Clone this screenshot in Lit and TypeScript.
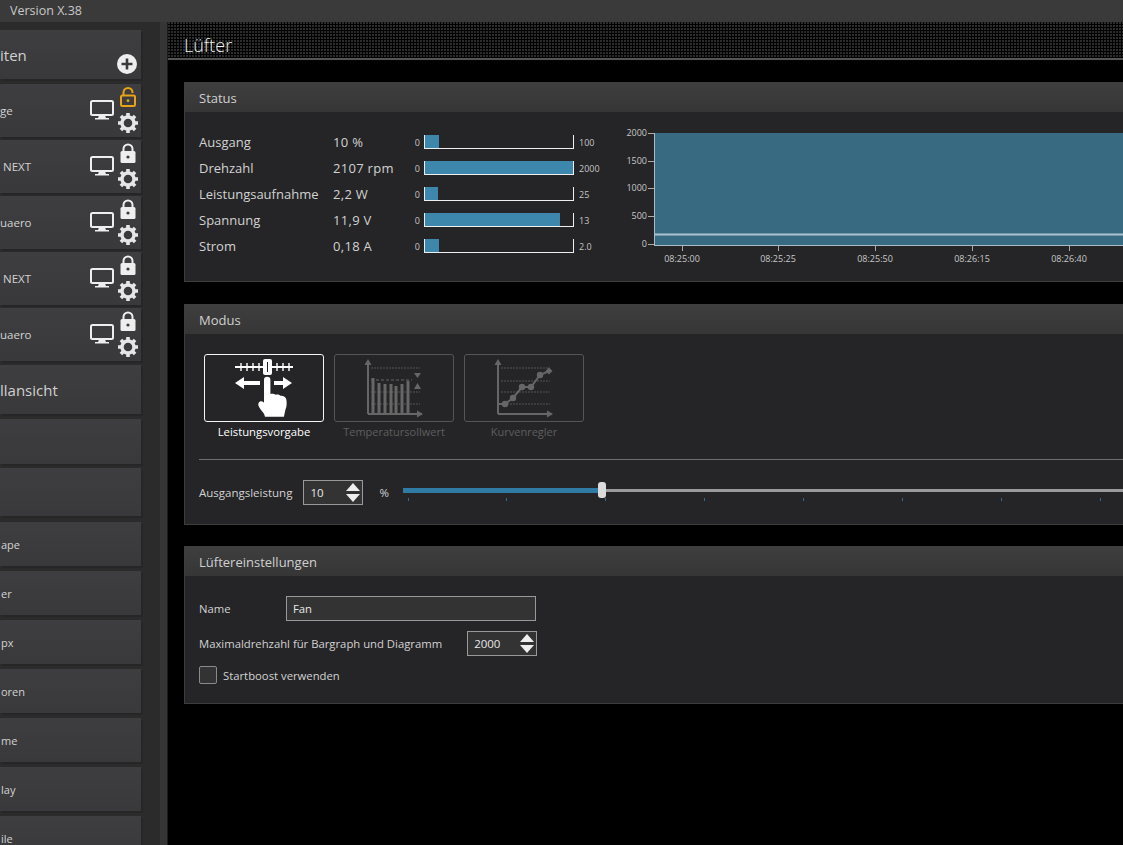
import { LitElement, css, html, svg } from "lit";
import { customElement } from "lit/decorators.js";

const monitorIcon = html`<svg class="monitor" width="24" height="20" viewBox="0 0 24 20">
  <rect x="1" y="1" width="22" height="14" rx="1.5" fill="none" stroke="#eee" stroke-width="2"></rect>
  <path d="M9 15.500h6l1 2.500h3v1.500H5V18h3z" fill="#eee"></path>
</svg>`;

const gearIcon = html`<svg class="gear" width="22" height="22" viewBox="0 0 22 22">
  <circle cx="11" cy="11" r="6" fill="none" stroke="#e6e6e6" stroke-width="3.400"></circle>
  <path
    d="M11 1v4M11 17v4M1 11h4M17 11h4M3.900 3.900l2.800 2.800M15.300 15.300l2.800 2.800M18.100 3.900l-2.800 2.800M6.700 15.300l-2.800 2.800"
    stroke="#e6e6e6"
    stroke-width="3.600"
  ></path>
</svg>`;

const lockClosed = html`<svg class="lock" width="16" height="20" viewBox="0 0 16 20">
  <path d="M3.500 9V6a4.500 4.500 0 0 1 9 0v3" fill="none" stroke="#eee" stroke-width="2"></path>
  <rect x="0.500" y="8" width="15" height="12" rx="1.500" fill="#eee"></rect>
  <circle cx="8" cy="14" r="1.600" fill="#3a3a3c"></circle>
</svg>`;

const lockOpen = html`<svg class="lock" width="16" height="20" viewBox="0 0 16 20">
  <path d="M3.500 9V5.500a4.500 4.500 0 0 1 9 0V6" fill="none" stroke="#e8a317" stroke-width="2"></path>
  <rect x="1" y="8.500" width="14" height="10.500" rx="1.500" fill="none" stroke="#e8a317" stroke-width="2"></rect>
  <circle cx="8" cy="13.700" r="1.400" fill="#e8a317"></circle>
</svg>`;

const plusIcon = html`<svg width="20" height="20" viewBox="0 0 20 20">
  <circle cx="10" cy="10" r="10" fill="#eee"></circle>
  <path d="M10 4.500v11M4.500 10h11" stroke="#3a3a3c" stroke-width="2.600"></path>
</svg>`;

const spinnerArrows = html`<svg class="arrows" width="14" height="19" viewBox="0 0 14 19">
  <path d="M7 0l7 8H0zM0 11h14l-7 8z" fill="#eee"></path>
</svg>`;

const ticks = [37, 43, 49, 55, 61, 67, 73, 79, 85];

const manualIcon = html`<svg width="118" height="66" viewBox="1 1 118 66">
  <path d="M31 13h58" stroke="#fff" stroke-width="2"></path>
  ${ticks.map((x) => svg`<path d="M${x} 9v8" stroke="#fff" stroke-width="1.400"></path>`)}
  <rect x="59" y="5" width="9" height="16" rx="2" fill="#fff"></rect>
  <path d="M63.500 8v10" stroke="#222" stroke-width="1"></path>
  <path d="M31 29l9-6v4h16v4H40v4zM88 29l-9-6v4H70v4h9v4z" fill="#fff"></path>
  <path fill="#fff" d="M60 26a3.200 3.200 0 0 1 6.400 0v14c2-.5 4 0 5 .8 2-.6 4 0 5 1 2.400-.4 5.600 1 6 4 .5 4 .3 7-1 10l-1.500 7H61l-1-3c-2-3-4.500-5-5.500-8-.8-2.500.8-4.800 3-4.500 1 .2 2 .6 2.500 1.500z"></path>
</svg>`;

const axes = svg`
  <path d="M34 60V9M88 60H34" stroke="#666" stroke-width="2" fill="none"></path>
  <path d="M34 5l-3.500 6h7zM89 60l-6-3.500v7z" fill="#666"></path>`;

const bars = [
  [39, 24],
  [45, 29],
  [51, 30],
  [57, 30],
  [62, 32],
  [68, 30],
  [74, 27],
];

const setpointIcon = html`<svg width="118" height="66" viewBox="1 1 118 66">
  ${[14, 38, 50].map((y) => svg`<path d="M37 ${y}h49" stroke="#555" stroke-width="1" stroke-dasharray="2 1"></path>`)}
  <path d="M37 26h41" stroke="#666" stroke-width="1" stroke-dasharray="3 2"></path>
  ${bars.map(([x, y]) => svg`<rect x=${x - 1.5} y=${y} width="3" height=${60 - y} fill="#666"></rect>`)}
  ${axes}
  <path d="M80 19h7l-3.500 5zM83.500 29l3.500 6h-7z" fill="#666"></path>
</svg>`;

const curveIcon = html`<svg width="118" height="66" viewBox="1 1 118 66">
  ${[14, 27, 38, 50].map((y) => svg`<path d="M37 ${y}h49" stroke="#555" stroke-width="1" stroke-dasharray="2 1"></path>`)}
  ${axes}
  <path d="M35 50h6l8-6 9-11h9l9-12 9-4" stroke="#666" stroke-width="2" fill="none"></path>
  ${[[41, 50], [49, 44], [58, 33], [67, 33], [76, 21]].map(
    ([x, y]) => svg`<circle cx=${x} cy=${y} r="3.200" fill="#666"></circle>`
  )}
  <path d="M85 13.500l3.500 3.500-3.500 3.500-3.500-3.500z" fill="#666"></path>
</svg>`;

const readings = [
  { label: "Ausgang", value: "10 %", max: "100", fill: 14 },
  { label: "Drehzahl", value: "2107 rpm", max: "2000", fill: 148 },
  { label: "Leistungsaufnahme", value: "2,2 W", max: "25", fill: 13 },
  { label: "Spannung", value: "11,9 V", max: "13", fill: 135 },
  { label: "Strom", value: "0,18 A", max: "2.0", fill: 14 },
];

const pageRows = [
  { label: "ge", locked: false, cls: "" },
  { label: "NEXT", locked: true, cls: "inset" },
  { label: "uaero", locked: true, cls: "" },
  { label: "NEXT", locked: true, cls: "inset" },
  { label: "uaero", locked: true, cls: "" },
];

const lowerRows = ["ape", "er", "px", "oren", "me", "lay", "ile"];

@customElement("app-root")
export class AppRoot extends LitElement {
  static styles = css`
    :host {
      display: block;
      width: 1123px;
      height: 845px;
      overflow: hidden;
      background: #000;
      color: #d2d2d2;
      font-family: "Open Sans", "Noto Sans", sans-serif;
      font-size: 13px;
    }

    .titlebar {
      height: 22px;
      box-sizing: border-box;
      padding-left: 10px;
      background: #3a3a3a;
      font-size: 12.500px;
      line-height: 21px;
      color: #c8c8c8;
    }

    .layout {
      display: flex;
      height: 823px;
    }

    .sidebar {
      flex: none;
      width: 160px;
      box-sizing: border-box;
      padding-top: 8px;
      overflow: hidden;
      background: #2b2b2b;
    }

    .strip {
      flex: none;
      width: 8px;
      background: #353535;
      border-right: 1px solid #1c1c1c;
      box-sizing: border-box;
    }

    .row {
      display: flex;
      align-items: center;
      justify-content: space-between;
      box-sizing: border-box;
      width: 141px;
      background: linear-gradient(#3e3e40, #39393b);
      box-shadow: 2px 2px 0 #262626;
    }

    .big {
      font-size: 15px;
      color: #d0d0d0;
    }

    .top {
      height: 49px;
      margin-bottom: 5px;
      padding-right: 4px;
    }

    .top .plus {
      align-self: flex-end;
      display: flex;
      margin-bottom: 5px;
    }

    .page {
      height: 53px;
      margin-bottom: 3px;
      padding-right: 2px;
      font-size: 11.500px;
    }

    .inset {
      padding-left: 3px;
    }

    .icons {
      display: flex;
      align-items: center;
      gap: 3px;
    }

    .monitor {
      margin-top: -2px;
    }

    .stack {
      display: flex;
      flex-direction: column;
      align-items: center;
      gap: 5px;
    }

    .lock,
    .gear,
    .monitor {
      display: block;
    }

    .full {
      height: 49px;
      margin: 4px 0 5px;
    }

    .blank {
      height: 45px;
      margin-bottom: 4px;
    }

    .blank.tall {
      height: 48px;
      margin-bottom: 6px;
    }

    .lower {
      height: 44px;
      margin-bottom: 5px;
      padding-left: 1px;
      font-size: 11px;
    }

    .main {
      flex: none;
      width: 1100px;
    }

    .heading {
      height: 38px;
      box-sizing: border-box;
      padding-left: 16px;
      border-bottom: 2px solid #555;
      background-color: #000;
      background-image: radial-gradient(circle at 1px 1px, #2c2c2c 1px, transparent 1.300px);
      background-size: 3px 3px;
      font-size: 18px;
      font-weight: 300;
      line-height: 46px;
      color: #f0f0f0;
      overflow: hidden;
    }

    .content {
      display: flex;
      flex-direction: column;
      gap: 21px;
      padding: 22px 0 0 16px;
    }

    .panel {
      background: #252527;
      border: 1px solid #3d3d3d;
      border-right: none;
      box-sizing: border-box;
    }

    .panel-head {
      height: 29px;
      padding-left: 14px;
      background: linear-gradient(#3e3e3e, #363636);
      font-size: 13px;
      line-height: 31px;
      color: #d0d0d0;
    }

    .status {
      height: 200px;
      margin-bottom: 1px;
    }

    .status-body {
      display: flex;
      align-items: flex-start;
      padding: 17px 0 0 14px;
    }

    .readings {
      flex: none;
      width: 440px;
      display: flex;
      flex-direction: column;
    }

    .reading {
      display: flex;
      align-items: center;
      height: 26px;
    }

    .reading .name {
      width: 134px;
      flex: none;
    }

    .reading .value {
      width: 80px;
      flex: none;
      letter-spacing: 0.3px;
    }

    .small {
      font-size: 9px;
      color: #c4c4c4;
    }

    .zero {
      width: 7px;
      flex: none;
      text-align: right;
    }

    .meter {
      flex: none;
      box-sizing: border-box;
      width: 150px;
      height: 14px;
      margin: 0 5px 0 4px;
      border: 1px solid #eee;
      border-top: none;
    }

    .meter div {
      height: 13px;
      background: #3d87ad;
    }

    .chart {
      display: block;
      flex: none;
      margin: -5px 0 0 -19px;
    }

    .chart text {
      font-family: "Open Sans", sans-serif;
      font-size: 9px;
      fill: #c8c8c8;
    }

    .mode {
      height: 221px;
    }

    .mode-body {
      padding: 20px 0 0 14px;
    }

    .modes {
      display: flex;
      gap: 10px;
      padding-left: 5px;
    }

    .mode-item {
      width: 120px;
      text-align: center;
      font-size: 11px;
      color: #5e5e5e;
    }

    .mode-box {
      box-sizing: border-box;
      height: 68px;
      margin-bottom: 2px;
      border: 1px solid #555;
      border-radius: 3px;
    }

    .mode-box svg {
      display: block;
    }

    .mode-item.on {
      color: #fff;
      font-size: 11.300px;
    }

    .mode-item.on .mode-box {
      border-color: #f4f4f4;
    }

    .rule {
      height: 1px;
      margin-top: 20px;
      background: #6e6e6e;
    }

    .power {
      display: flex;
      align-items: center;
      height: 25px;
      margin-top: 20px;
      font-size: 11.500px;
    }

    .spin {
      display: flex;
      align-items: center;
      justify-content: space-between;
      box-sizing: border-box;
      height: 25px;
      padding: 0 2px 0 6px;
      background: #333;
      border: 1px solid #999;
      font-size: 11.500px;
      color: #e8e8e8;
    }

    .spin.power-spin {
      width: 60px;
      margin: 0 16px 0 11px;
    }

    .unit {
      width: 24px;
      flex: none;
    }

    .slider {
      position: relative;
      flex: none;
      width: 800px;
      height: 25px;
    }

    .track {
      position: absolute;
      top: 9px;
      left: 0;
      right: 0;
      height: 3px;
      background: #9a9a9a;
    }

    .track-on {
      position: absolute;
      top: 8px;
      left: 0;
      width: 197px;
      height: 5px;
      background: #2f7ba3;
    }

    .thumb {
      position: absolute;
      top: 2px;
      left: 195px;
      width: 8px;
      height: 16px;
      border-radius: 3px;
      background: #dcdcdc;
    }

    .tick {
      position: absolute;
      top: 18px;
      width: 1px;
      height: 3px;
      background: #2f6d8f;
    }

    .settings {
      height: 158px;
    }

    .settings-body {
      display: flex;
      flex-direction: column;
      padding: 20px 0 0 14px;
      font-size: 11.300px;
    }

    .field {
      display: flex;
      align-items: center;
      height: 25px;
    }

    .field + .field {
      margin-top: 10px;
    }

    .field .field-name {
      width: 87px;
      flex: none;
    }

    .text-input {
      box-sizing: border-box;
      width: 250px;
      height: 25px;
      padding-left: 6px;
      line-height: 23px;
      background: #333;
      border: 1px solid #999;
      color: #e8e8e8;
    }

    .spin.rpm-spin {
      width: 70px;
      margin-left: 25px;
    }

    .check {
      display: flex;
      align-items: center;
      gap: 6px;
      height: 18px;
      margin-top: 10px;
    }

    .box {
      box-sizing: border-box;
      width: 18px;
      height: 18px;
      background: #333;
      border: 1px solid #8a8a8a;
      border-radius: 2px;
    }
  `;

  render() {
    return html`
      <div class="titlebar">Version X.38</div>
      <div class="layout">
        <nav class="sidebar">
          <div class="row big top"><span>iten</span><span class="plus">${plusIcon}</span></div>
          ${pageRows.map(
            (r) => html`<div class="row page ${r.cls}">
              <span>${r.label}</span>
              <span class="icons">
                ${monitorIcon}
                <span class="stack">${r.locked ? lockClosed : lockOpen}${gearIcon}</span>
              </span>
            </div>`
          )}
          <div class="row big full"><span>llansicht</span></div>
          <div class="row blank"></div>
          <div class="row blank tall"></div>
          ${lowerRows.map((l) => html`<div class="row lower"><span>${l}</span></div>`)}
        </nav>
        <div class="strip"></div>
        <main class="main">
          <div class="heading">Lüfter</div>
          <div class="content">
            <section class="panel status">
              <div class="panel-head">Status</div>
              <div class="status-body">
                <div class="readings">
                  ${readings.map(
                    (r) => html`<div class="reading">
                      <span class="name">${r.label}</span>
                      <span class="value">${r.value}</span>
                      <span class="small zero">0</span>
                      <div class="meter"><div style="width:${r.fill}px"></div></div>
                      <span class="small">${r.max}</span>
                    </div>`
                  )}
                </div>
                ${this.renderChart()}
              </div>
            </section>

            <section class="panel mode">
              <div class="panel-head">Modus</div>
              <div class="mode-body">
                <div class="modes">
                  <div class="mode-item on"><div class="mode-box">${manualIcon}</div>Leistungsvorgabe</div>
                  <div class="mode-item"><div class="mode-box">${setpointIcon}</div>Temperatursollwert</div>
                  <div class="mode-item"><div class="mode-box">${curveIcon}</div>Kurvenregler</div>
                </div>
                <div class="rule"></div>
                <div class="power">
                  <span>Ausgangsleistung</span>
                  <div class="spin power-spin"><span>10</span>${spinnerArrows}</div>
                  <span class="unit">%</span>
                  <div class="slider">
                    <div class="track"></div>
                    <div class="track-on"></div>
                    ${[5, 103, 202, 301, 400, 499, 598, 697].map(
                      (x) => html`<div class="tick" style="left:${x}px"></div>`
                    )}
                    <div class="thumb"></div>
                  </div>
                </div>
              </div>
            </section>

            <section class="panel settings">
              <div class="panel-head">Lüftereinstellungen</div>
              <div class="settings-body">
                <div class="field">
                  <span class="field-name">Name</span>
                  <div class="text-input">Fan</div>
                </div>
                <div class="field">
                  <span>Maximaldrehzahl für Bargraph und Diagramm</span>
                  <div class="spin rpm-spin"><span>2000</span>${spinnerArrows}</div>
                </div>
                <label class="check"><span class="box"></span>Startboost verwenden</label>
              </div>
            </section>
          </div>
        </main>
      </div>
    `;
  }

  // coordinates inside this svg: left = page x - 620, top = page y - 124
  private renderChart() {
    const yTicks = [
      ["2000", 9],
      ["1500", 37],
      ["1000", 64],
      ["500", 92],
      ["0", 120],
    ] as const;
    const xTicks = [
      ["08:25:00", 62],
      ["08:25:25", 158],
      ["08:25:50", 255],
      ["08:26:15", 352],
      ["08:26:40", 449],
    ] as const;
    return html`<svg class="chart" width="503" height="145" viewBox="0 0 503 145">
      <rect x="34" y="9" width="469" height="112" fill="#386a82"></rect>
      <path d="M34.500 9v113M34 121.500h469" stroke="#a9bcc6" stroke-width="1" fill="none"></path>
      <path d="M35 110.500h468" stroke="#abc3cf" stroke-width="2" fill="none"></path>
      ${yTicks.map(
        ([label, y]) => svg`
          <text x="27" y=${y + 3} text-anchor="end">${label}</text>
          <path d="M28 ${y + 0.5}h6" stroke="#aaa" stroke-width="1"></path>`
      )}
      ${xTicks.map(
        ([label, x]) => svg`
          <path d="M${x + 0.5} 122v5" stroke="#aaa" stroke-width="1"></path>
          <text x=${x} y="138" text-anchor="middle">${label}</text>`
      )}
    </svg>`;
  }
}
